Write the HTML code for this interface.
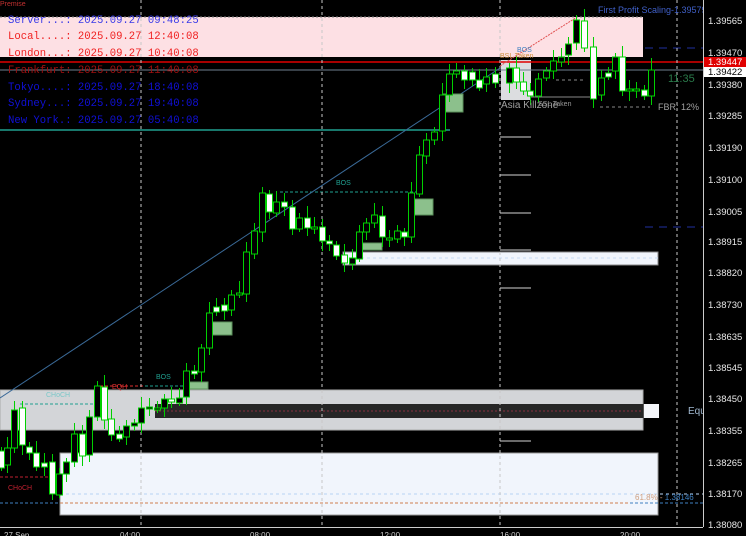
<!DOCTYPE html>
<html><head><meta charset="utf-8"><style>
html,body{margin:0;padding:0;background:#000;width:746px;height:536px;overflow:hidden}
svg{display:block}
.t{font-family:"Liberation Mono",monospace;font-size:10.6px}
.a{font-family:"Liberation Sans",sans-serif;font-size:9.5px;fill:#e8e8e8}
.s{font-family:"Liberation Sans",sans-serif}
</style></head><body>
<svg id="c" width="746" height="536" xmlns="http://www.w3.org/2000/svg">
<rect width="746" height="536" fill="#000"/>
<rect x="0" y="17" width="643" height="40" fill="#fde0e4"/>
<rect x="0" y="390" width="643" height="40" fill="#d3d5d8" stroke="#aaa" stroke-width="1"/>
<rect x="155" y="404" width="488" height="14" fill="#262626"/>
<line x1="155" y1="411" x2="643" y2="411" stroke="#8a3040" stroke-dasharray="2,2"/>
<rect x="644" y="404" width="15" height="14" fill="#f4f6fa"/>
<rect x="60" y="453" width="598" height="62" fill="#f1f5fc" stroke="#999"/>
<line x1="60" y1="494" x2="703" y2="494" stroke="#b8d4f4" stroke-dasharray="3,3"/>
<line x1="0" y1="503" x2="703" y2="503" stroke="#d08050" stroke-dasharray="3,2"/>
<line x1="0" y1="503" x2="60" y2="503" stroke="#4080c0" stroke-dasharray="3,2"/>
<line x1="630" y1="503" x2="703" y2="503" stroke="#4080c0" stroke-dasharray="3,2"/>
<rect x="343" y="252" width="315" height="13" fill="#f1f5fc" stroke="#888"/>
<line x1="343" y1="258" x2="658" y2="258" stroke="#c8dcf4" stroke-dasharray="3,3"/>
<rect x="501" y="60" width="30" height="40" fill="#dcdde0"/>
<line x1="0" y1="62" x2="703" y2="62" stroke="#e00000" stroke-width="1.5"/>
<line x1="0" y1="70" x2="703" y2="70" stroke="#708090"/>
<line x1="0" y1="130" x2="450" y2="130" stroke="#20a090" stroke-width="1.5"/>
<line x1="645" y1="48" x2="703" y2="48" stroke="#2030a0" stroke-dasharray="8,6"/>
<line x1="645" y1="227" x2="703" y2="227" stroke="#2030a0" stroke-dasharray="8,6"/>
<line x1="280" y1="192" x2="418" y2="192" stroke="#20a090" stroke-dasharray="3,2"/>
<line x1="20" y1="404" x2="100" y2="404" stroke="#20a090" stroke-dasharray="3,2"/>
<line x1="100" y1="386" x2="186" y2="386" stroke="#20a090" stroke-dasharray="3,2"/>
<line x1="100" y1="386" x2="145" y2="386" stroke="#e03030" stroke-dasharray="3,2"/>
<line x1="0" y1="477" x2="50" y2="477" stroke="#c02030" stroke-dasharray="3,2"/>
<line x1="531" y1="97" x2="597" y2="97" stroke="#888"/>
<line x1="600" y1="107" x2="650" y2="107" stroke="#888" stroke-dasharray="3,3"/>
<line x1="556" y1="80" x2="583" y2="80" stroke="#888" stroke-dasharray="3,3"/>
<g stroke="#aaa" stroke-width="1.3">
<line x1="500" y1="137" x2="531" y2="137"/><line x1="500" y1="175" x2="531" y2="175"/><line x1="500" y1="213" x2="531" y2="213"/><line x1="500" y1="250" x2="531" y2="250"/><line x1="500" y1="288" x2="531" y2="288"/><line x1="500" y1="441" x2="531" y2="441"/>
</g>
<g stroke="#c8c8c8" stroke-dasharray="3,3"><line x1="141" y1="0" x2="141" y2="527"/><line x1="322" y1="0" x2="322" y2="527"/><line x1="500" y1="0" x2="500" y2="527"/><line x1="677" y1="0" x2="677" y2="527"/></g>
<line x1="0" y1="398" x2="500" y2="68" stroke="#3a6a98"/>
<line x1="500" y1="66" x2="577" y2="17" stroke="#e05050" stroke-dasharray="2,1"/>
<line x1="0" y1="17" x2="643" y2="17" stroke="#808080" stroke-dasharray="2,2"/>
<g fill="#8cc08c" stroke="#5a905a"><rect x="211" y="322" width="21" height="13"/><rect x="413" y="199" width="20" height="16"/><rect x="443" y="94" width="20" height="18"/><rect x="362" y="243" width="20" height="7"/><rect x="186" y="382" width="22" height="7"/></g>
<g id="cand"></g>
<text x="336" y="185" class="s" font-size="7" fill="#20a090">BOS</text>
<text x="156" y="379" class="s" font-size="7" fill="#20a090">BOS</text>
<text x="46" y="397" class="s" font-size="7" fill="#7ac8c8">CHoCH</text>
<text x="112" y="389" class="s" font-size="7" fill="#e03030">EQH</text>
<text x="8" y="490" class="s" font-size="7" fill="#c02030">CHoCH</text>
<text x="501" y="108" class="s" font-size="10" fill="#a0a0a0">Asia Killzone</text>
<text x="538" y="106" class="s" font-size="7" fill="#999">SSL Taken</text>
<text x="500" y="58" class="s" font-size="7" fill="#d09040">BSL Taken</text>
<text x="517" y="52" class="s" font-size="7" fill="#4080c0">BOS</text>
<text x="598" y="13" class="s" font-size="9" fill="#4060c8">First Profit Scaling-1.39579</text>
<text x="668" y="82" class="s" font-size="11" fill="#2a7a4a">11:35</text>
<text x="658" y="110" class="s" font-size="9" fill="#a0a0a0">FBR: 12%</text>
<text x="635" y="500" class="s" font-size="8" fill="#d0a080">61.8% - <tspan fill="#4080c0">1.38146</tspan></text>
<text x="688" y="414" class="s" font-size="10" fill="#a0b8d0">Equ</text>
<g class="t">
<text x="8" y="23" fill="#3a3ae8">Server...: 2025.09.27 09:48:25</text>
<text x="8" y="39" fill="#f02020">Local....: 2025.09.27 12:40:08</text>
<text x="8" y="56" fill="#f02020">London...: 2025.09.27 10:40:08</text>
<text x="8" y="73" fill="#a01010">Frankfurt: 2025.09.27 11:40:08</text>
<text x="8" y="90" fill="#1010d8">Tokyo....: 2025.09.27 18:40:08</text>
<text x="8" y="106" fill="#1010d8">Sydney...: 2025.09.27 19:40:08</text>
<text x="8" y="123" fill="#1010d8">New York.: 2025.09.27 05:40:08</text>
</g>
<text x="0" y="6" class="s" font-size="7" fill="#c03030">Premise</text>
<rect x="703" y="0" width="43" height="536" fill="#000"/>
<line x1="703.5" y1="0" x2="703.5" y2="527" stroke="#ccc"/>
<line x1="0" y1="527.5" x2="703" y2="527.5" stroke="#ccc"/>
<g class="a">
<text x="708" y="24">1.39565</text><text x="708" y="56">1.39470</text><text x="708" y="88">1.39380</text><text x="708" y="119">1.39285</text><text x="708" y="151">1.39190</text><text x="708" y="183">1.39100</text><text x="708" y="215">1.39005</text><text x="708" y="245">1.38915</text><text x="708" y="276">1.38820</text><text x="708" y="308">1.38730</text><text x="708" y="340">1.38635</text><text x="708" y="371">1.38545</text><text x="708" y="402">1.38450</text><text x="708" y="434">1.38355</text><text x="708" y="466">1.38265</text><text x="708" y="497">1.38170</text><text x="708" y="528">1.38080</text>
</g>
<rect x="704" y="57" width="42" height="10" fill="#e00000"/>
<text x="708" y="65" class="a" style="fill:#fff">1.39447</text>
<rect x="704" y="67" width="42" height="10" fill="#fff"/>
<text x="708" y="75" class="a" style="fill:#000">1.39422</text>
<g class="a" style="fill:#ccc;font-size:8px"><text x="4" y="538">27 Sep</text><text x="120" y="538">04:00</text><text x="250" y="538">08:00</text><text x="380" y="538">12:00</text><text x="500" y="538">16:00</text><text x="620" y="538">20:00</text></g>
</svg>
<script>
var C=[[1,451,468,'w'],[7,448,465,'b'],[14,410,448,'b'],[22,408,445,'w'],[29,447,453,'w'],[36,453,467,'w'],[44,463,467,'w'],[52,462,494,'w'],[59,474,495,'b'],[66,462,474,'b'],[74,434,462,'b'],[82,434,456,'w'],[89,417,455,'b'],[97,386,417,'b'],[104,387,420,'w'],[111,419,435,'w'],[119,434,439,'w'],[126,426,437,'b'],[134,423,426,'b'],[141,408,423,'b'],[149,407,409,'b'],[157,408,409,'b'],[164,399,408,'b'],[171,399,402,'w'],[179,398,403,'b'],[186,371,397,'b'],[194,371,374,'w'],[201,348,372,'b'],[209,313,348,'b'],[216,307,312,'w'],[224,305,311,'w'],[231,295,310,'b'],[239,293,295,'b'],[246,252,294,'b'],[254,231,254,'b'],[262,193,232,'b'],[269,194,212,'w'],[276,202,213,'b'],[284,202,207,'w'],[292,207,229,'w'],[299,218,229,'b'],[307,218,228,'w'],[314,227,229,'b'],[322,227,241,'w'],[329,241,244,'w'],[336,245,256,'w'],[344,255,263,'w'],[352,258,264,'b'],[359,232,259,'b'],[366,223,232,'b'],[374,215,223,'b'],[382,216,237,'w'],[389,238,240,'b'],[397,231,239,'b'],[404,232,237,'w'],[411,193,237,'b'],[419,155,194,'b'],[426,140,156,'b'],[434,132,140,'b'],[442,95,131,'b'],[449,74,95,'b'],[456,71,74,'b'],[464,71,80,'w'],[472,72,80,'w'],[479,80,88,'w'],[486,77,84,'b'],[495,74,83,'w'],[509,68,83,'b'],[516,68,82,'w'],[523,82,91,'w'],[530,91,96,'w'],[538,79,96,'b'],[546,71,78,'b'],[553,61,71,'b'],[561,57,62,'b'],[568,44,55,'b'],[576,20,43,'b'],[584,21,48,'w'],[593,47,99,'w'],[601,78,95,'b'],[608,73,77,'w'],[615,57,71,'b'],[622,57,91,'w'],[629,89,91,'b'],[636,89,91,'b'],[644,90,96,'w'],[651,70,96,'b']];
var s='';C.forEach(function(c,i){var x=c[0],t=c[1],b=c[2],e=4+(i*7%9),f=3+(i*5%8);
s+='<line x1="'+(x+0.5)+'" y1="'+(t-e)+'" x2="'+(x+0.5)+'" y2="'+(b+f)+'" stroke="#00d000"/>';
s+='<rect x="'+(x-2.5)+'" y="'+t+'" width="6" height="'+Math.max(2,b-t)+'" fill="'+(c[3]=='w'?'#fff':'#000')+'" stroke="#00d000"/>';});
document.getElementById('cand').innerHTML=s;
</script>
</body></html>
